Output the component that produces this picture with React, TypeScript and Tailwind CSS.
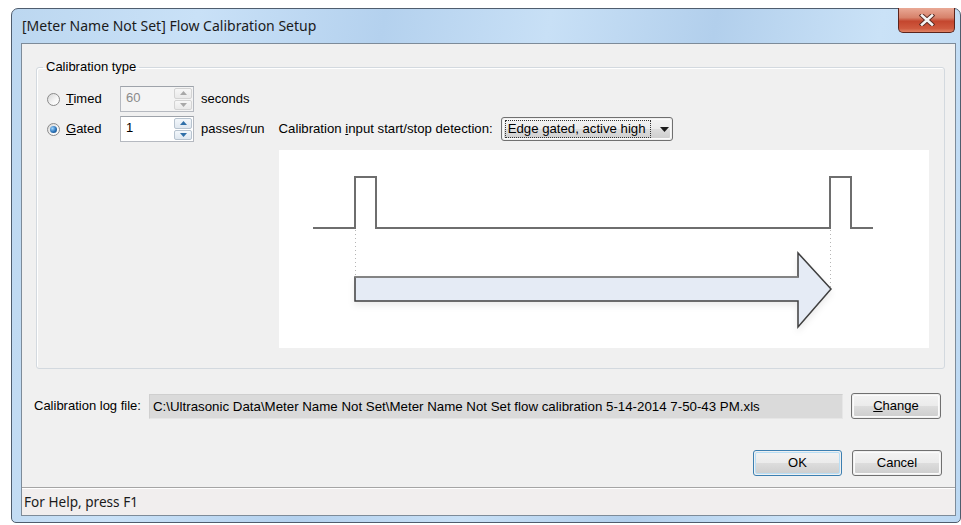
import React from "react";

const ui = { fontFamily: '"Liberation Sans", Arial, sans-serif' };
const chrome = { fontFamily: '"Noto Sans", "Open Sans", sans-serif' };

function Radio({ checked }: { checked?: boolean }) {
  return (
    <div className="w-[13px] h-[13px] rounded-full border border-[#8a8a8a] bg-[linear-gradient(135deg,#d6d6d6,#f7f7f7_60%,#ffffff)] flex items-center justify-center shrink-0">
      {checked && (
        <div className="w-[7px] h-[7px] rounded-full bg-[radial-gradient(circle_at_35%_35%,#9fd6ff,#2a72b8_55%,#123f6e)]" />
      )}
    </div>
  );
}

function SpinArrow({ up, enabled }: { up?: boolean; enabled?: boolean }) {
  return (
    <svg width="7" height="4" viewBox="0 0 7 4">
      <path
        d={up ? "M0 4 L3.5 0 L7 4 Z" : "M0 0 L3.5 4 L7 0 Z"}
        fill={enabled ? "#2f6fa8" : "#a8a8a8"}
      />
    </svg>
  );
}

function Spinner({ value, enabled }: { value: string; enabled?: boolean }) {
  return (
    <div
      className={`w-[74px] h-[26px] border border-[#b5b9c0] border-t-[#9ea3aa] flex ${
        enabled ? "bg-white" : "bg-[#f4f4f4]"
      }`}
    >
      <div
        className={`flex-1 pl-[5px] text-[13px] leading-[22px] ${
          enabled ? "text-black" : "text-[#8a8a8a]"
        }`}
        style={ui}
      >
        {value}
      </div>
      <div className="w-[20px] flex flex-col gap-[1px] p-[1px]">
        {[true, false].map((up) => (
          <div
            key={String(up)}
            className={`flex-1 rounded-[2px] border flex items-center justify-center ${
              enabled
                ? "border-[#b7c3cf] bg-[linear-gradient(#f3f7fb,#dfe7ef)]"
                : "border-[#d3d3d3] bg-[linear-gradient(#f7f7f7,#e9e9e9)]"
            }`}
          >
            <SpinArrow up={up} enabled={enabled} />
          </div>
        ))}
      </div>
    </div>
  );
}

function WinButton({
  children,
  width,
  primary,
}: {
  children: React.ReactNode;
  width: string;
  primary?: boolean;
}) {
  return (
    <div
      className={`${width} h-[26px] rounded-[3px] border ${
        primary ? "border-[#3c7fb1]" : "border-[#707070]"
      } p-[1px]`}
    >
      <div
        className={`h-full rounded-[2px] border ${
          primary ? "border-[#b8def5]" : "border-[#fbfbfb]"
        } bg-[linear-gradient(#f2f2f2_0%,#ebebeb_50%,#dddddd_50%,#cfcfcf_100%)] flex items-center justify-center text-[13px] text-black`}
        style={ui}
      >
        {children}
      </div>
    </div>
  );
}

function PulseDiagram() {
  return (
    <svg width="650" height="198" viewBox="0 0 650 198">
      <defs>
        <filter id="arrowShadow" x="-5%" y="-20%" width="110%" height="150%">
          <feDropShadow dx="0" dy="4" stdDeviation="3" floodColor="#000" floodOpacity="0.08" />
        </filter>
      </defs>
      {/* gate signal: two short high pulses on a low baseline */}
      <path
        d="M34 78 H76 V27 H97 V78 H551 V27 H572 V78 H594"
        fill="none"
        stroke="#6e6e6e"
        strokeWidth="2"
      />
      {/* edge markers */}
      <line x1="76.5" y1="80" x2="76.5" y2="127" stroke="#b5b5b5" strokeWidth="1" strokeDasharray="1 3" />
      <line x1="551.5" y1="80" x2="551.5" y2="139" stroke="#b5b5b5" strokeWidth="1" strokeDasharray="1 3" />
      {/* measurement span arrow */}
      <path
        d="M76 127 H519 V103 L552 139 L519 177 V151 H76 Z"
        fill="#e5ebf5"
        stroke="#3f3f3f"
        strokeWidth="1.5"
        strokeLinejoin="miter"
        filter="url(#arrowShadow)"
      />
      <line x1="76" y1="127" x2="519" y2="127" stroke="#8c8c8c" strokeWidth="1.5" />
    </svg>
  );
}

function CloseGlyph() {
  return (
    <svg width="16" height="12" viewBox="0 0 16 12">
      <path
        d="M3 1.5 L13 10.5 M13 1.5 L3 10.5"
        stroke="#5a2a22"
        strokeWidth="4.5"
        strokeLinecap="square"
      />
      <path d="M3 1.5 L13 10.5 M13 1.5 L3 10.5" stroke="#f4f4f4" strokeWidth="2.6" strokeLinecap="square" />
    </svg>
  );
}

export default function App() {
  return (
    <div className="w-[961px] h-[525px] bg-white pt-[8px] pl-[11px] overflow-hidden">
      <div className="relative w-[950px] h-[515px] rounded-t-[7px] rounded-b-[5px] border border-[#4f5d6e] bg-[linear-gradient(100deg,#bcd7f0_0%,#c9e1f7_18%,#b4d1ee_36%,#c8e0f6_52%,#b2cfec_68%,#cae2f7_84%,#bcd8f2_100%)] flex flex-col">
        {/* title bar */}
        <div className="h-[34px] flex items-center pl-[10px] relative">
          <span className="text-[14px] text-[#1b1b1b] mt-[-1px]" style={chrome}>
            [Meter Name Not Set] Flow Calibration Setup
          </span>
          <div className="absolute right-[5px] top-[-1px] w-[57px] h-[25px] rounded-b-[5px] border border-[#5b241c] border-t-0 bg-[linear-gradient(#e9a996_0%,#d7826b_40%,#c4462e_55%,#cf5a3f_85%,#e08466_100%)] flex items-center justify-center">
            <CloseGlyph />
          </div>
        </div>

        {/* client area */}
        <div className="flex-1 ml-[9px] mr-[4px] mb-[6px] border border-[#7d8b99] bg-[#f0f0f0] flex flex-col">
          <div className="flex-1 flex flex-col text-[13px] text-black" style={ui}>
            <fieldset className="mt-[16px] ml-[14px] mr-[10px] border border-[#d3d9df] rounded-[3px] pl-[10px] pt-[12px] pb-[20px] shadow-[inset_1px_1px_0_#ffffff]">
              <legend className="ml-[-4px] px-[3px] leading-[14px]">Calibration type</legend>

              <div className="h-[26px] flex items-center">
                <div className="w-[73px] flex items-center gap-[6px]">
                  <Radio />
                  <span>
                    <span className="underline">T</span>imed
                  </span>
                </div>
                <Spinner value="60" />
                <span className="ml-[7px]">seconds</span>
              </div>

              <div className="flex items-start mt-[4px]">
                <div className="h-[26px] flex items-center">
                  <div className="w-[73px] flex items-center gap-[6px]">
                    <Radio checked />
                    <span>
                      <span className="underline">G</span>ated
                    </span>
                  </div>
                  <Spinner value="1" enabled />
                  <span className="ml-[7px]">passes/run</span>
                </div>
                <div className="ml-[14px] flex flex-col">
                  <div className="h-[26px] flex items-center text-[13.2px]">
                    <span>
                      Calibration <span className="underline">i</span>nput start/stop detection:
                    </span>
                    <div className="ml-[8px] w-[172px] h-[24px] rounded-[3px] border border-[#707070] p-[1px]">
                      <div className="h-full rounded-[2px] border border-[#fbfbfb] bg-[linear-gradient(#f2f2f2_0%,#ebebeb_50%,#dddddd_50%,#cfcfcf_100%)] flex items-center pl-[1px]">
                        <div className="w-[146px] h-[18px] border border-dotted border-[#333] overflow-hidden whitespace-nowrap leading-[16px] pl-[2px]">
                          Edge gated, active high
                        </div>
                        <svg width="9" height="5" viewBox="0 0 9 5" className="ml-[9px]">
                          <path d="M0 0 H9 L4.5 5 Z" fill="#1a1a1a" />
                        </svg>
                      </div>
                    </div>
                  </div>
                  <div className="mt-[8px] w-[650px] h-[198px] bg-white">
                    <PulseDiagram />
                  </div>
                </div>
              </div>
            </fieldset>

            <div className="mt-[24px] pl-[12px] flex items-center">
              <span className="w-[115px]">Calibration log file:</span>
              <div className="w-[694px] h-[25px] bg-[#dadada] border border-[#e6e6e6] border-t-[#cfcfcf] border-l-[#cfcfcf] leading-[23px] pl-[3px] whitespace-nowrap overflow-hidden text-[13.3px]">
                C:\Ultrasonic Data\Meter Name Not Set\Meter Name Not Set flow calibration 5-14-2014 7-50-43 PM.xls
              </div>
              <div className="ml-[8px]">
                <WinButton width="w-[90px]">
                  <span>
                    <span className="underline">C</span>hange
                  </span>
                </WinButton>
              </div>
            </div>

            <div className="mt-[31px] pr-[13px] flex justify-end gap-[10px]">
              <WinButton width="w-[89px]" primary>
                OK
              </WinButton>
              <WinButton width="w-[90px]">Cancel</WinButton>
            </div>
          </div>

          {/* status bar */}
          <div className="h-[28px] border-t border-[#a5a5a5] bg-[#f1eeee] shadow-[inset_0_1px_0_#ffffff] flex items-center pl-[2px] pt-[2px]">
            <span className="text-[13.6px] text-[#1b1b1b]" style={chrome}>
              For Help, press F1
            </span>
          </div>
        </div>
      </div>
    </div>
  );
}
